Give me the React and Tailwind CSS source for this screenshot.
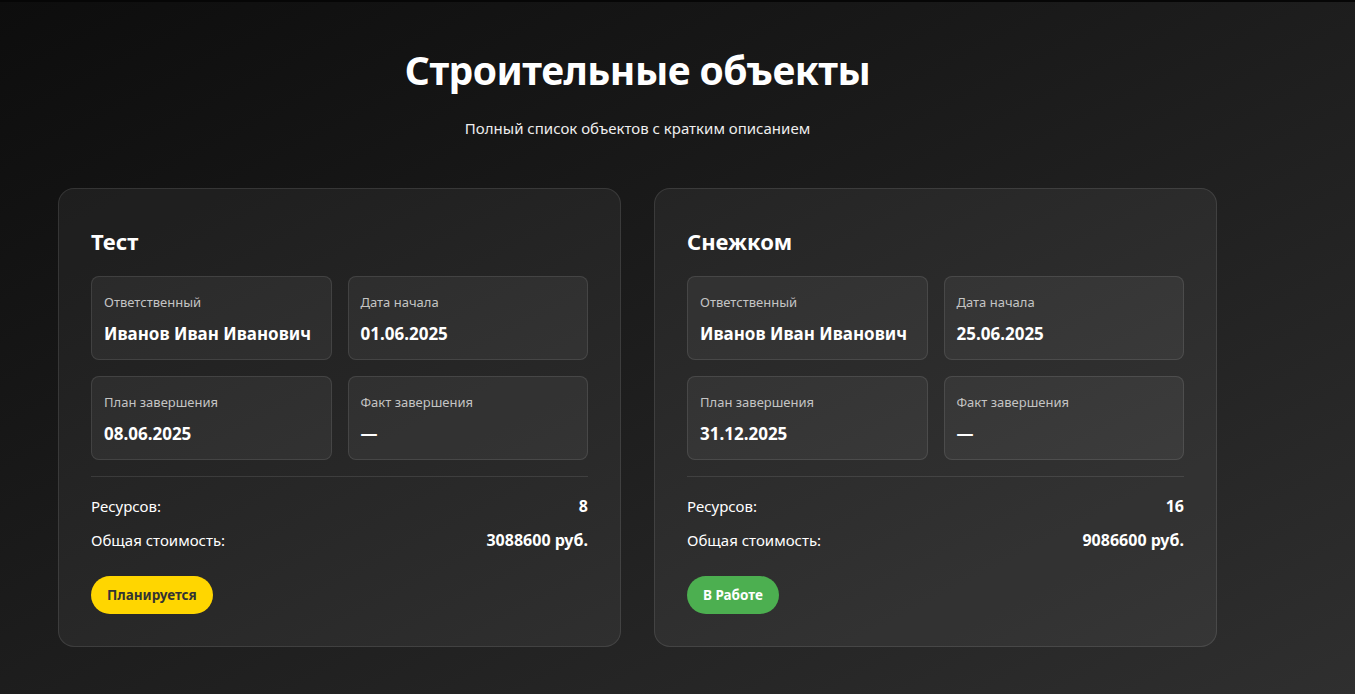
const objects = [
  {
    name: "Тест",
    person: "Иванов Иван Иванович",
    start: "01.06.2025",
    plan: "08.06.2025",
    fact: "—",
    resources: 8,
    cost: "3088600 руб.",
    status: "Планируется",
  },
  {
    name: "Снежком",
    person: "Иванов Иван Иванович",
    start: "25.06.2025",
    plan: "31.12.2025",
    fact: "—",
    resources: 16,
    cost: "9086600 руб.",
    status: "В Работе",
  },
];

function InfoBox({ label, value }) {
  return (
    <div className="h-[84px] rounded-lg border border-white/10 bg-white/[0.05] px-3 pt-4">
      <div className="text-[13px] leading-[18px] text-[#c4c4c4]">{label}</div>
      <div className="mt-[11px] text-[17px] font-bold leading-6 text-white">{value}</div>
    </div>
  );
}

function StatusBadge({ status }) {
  if (status === "В Работе") {
    return (
      <span className="inline-flex h-[38px] items-center rounded-full bg-[#4caf50] px-4 text-[13.5px] font-bold text-white">
        {status}
      </span>
    );
  }
  return (
    <span className="inline-flex h-[38px] items-center rounded-full bg-[#ffd600] px-4 text-[13.5px] font-bold text-[#333]">
      {status}
    </span>
  );
}

function ObjectCard({ item }) {
  return (
    <div className="rounded-2xl border border-white/10 bg-white/[0.05] px-8 pb-8 pt-[36px]">
      <h2 className="text-[22px] font-bold leading-[33px] text-white">{item.name}</h2>
      <div className="mt-[18px] grid grid-cols-2 gap-x-4 gap-y-4">
        <InfoBox label="Ответственный" value={item.person} />
        <InfoBox label="Дата начала" value={item.start} />
        <InfoBox label="План завершения" value={item.plan} />
        <InfoBox label="Факт завершения" value={item.fact} />
      </div>
      <div className="mt-4 border-t border-white/10 pt-[17px]">
        <div className="flex justify-between text-[15px] leading-6 text-white">
          <span>Ресурсов:</span>
          <span className="text-[16px] font-bold">{item.resources}</span>
        </div>
        <div className="mt-[10px] flex justify-between text-[15px] leading-6 text-white">
          <span>Общая стоимость:</span>
          <span className="text-[16px] font-bold">{item.cost}</span>
        </div>
      </div>
      <div className="mt-6">
        <StatusBadge status={item.status} />
      </div>
    </div>
  );
}

export default function App() {
  return (
    <div
      className="min-h-screen bg-gradient-to-br from-[#0d0d0d] to-[#2f2f2f] text-white"
      style={{ fontFamily: '"Noto Sans", "Open Sans", sans-serif' }}
    >
      <div className="h-[2px] bg-[#060606]" />
      <div className="ml-[58px] w-[1159px] pb-12">
        <header className="pt-[38px] text-center">
          <h1 className="text-[39px] font-bold leading-[60px] tracking-[-0.5px]">Строительные объекты</h1>
          <p className="mt-[18px] text-[15px] leading-5 text-[#eeeeee]">
            Полный список объектов с кратким описанием
          </p>
        </header>
        <div className="mt-[50px] grid grid-cols-2 gap-[33px]">
          {objects.map((item) => (
            <ObjectCard key={item.name} item={item} />
          ))}
        </div>
      </div>
    </div>
  );
}
